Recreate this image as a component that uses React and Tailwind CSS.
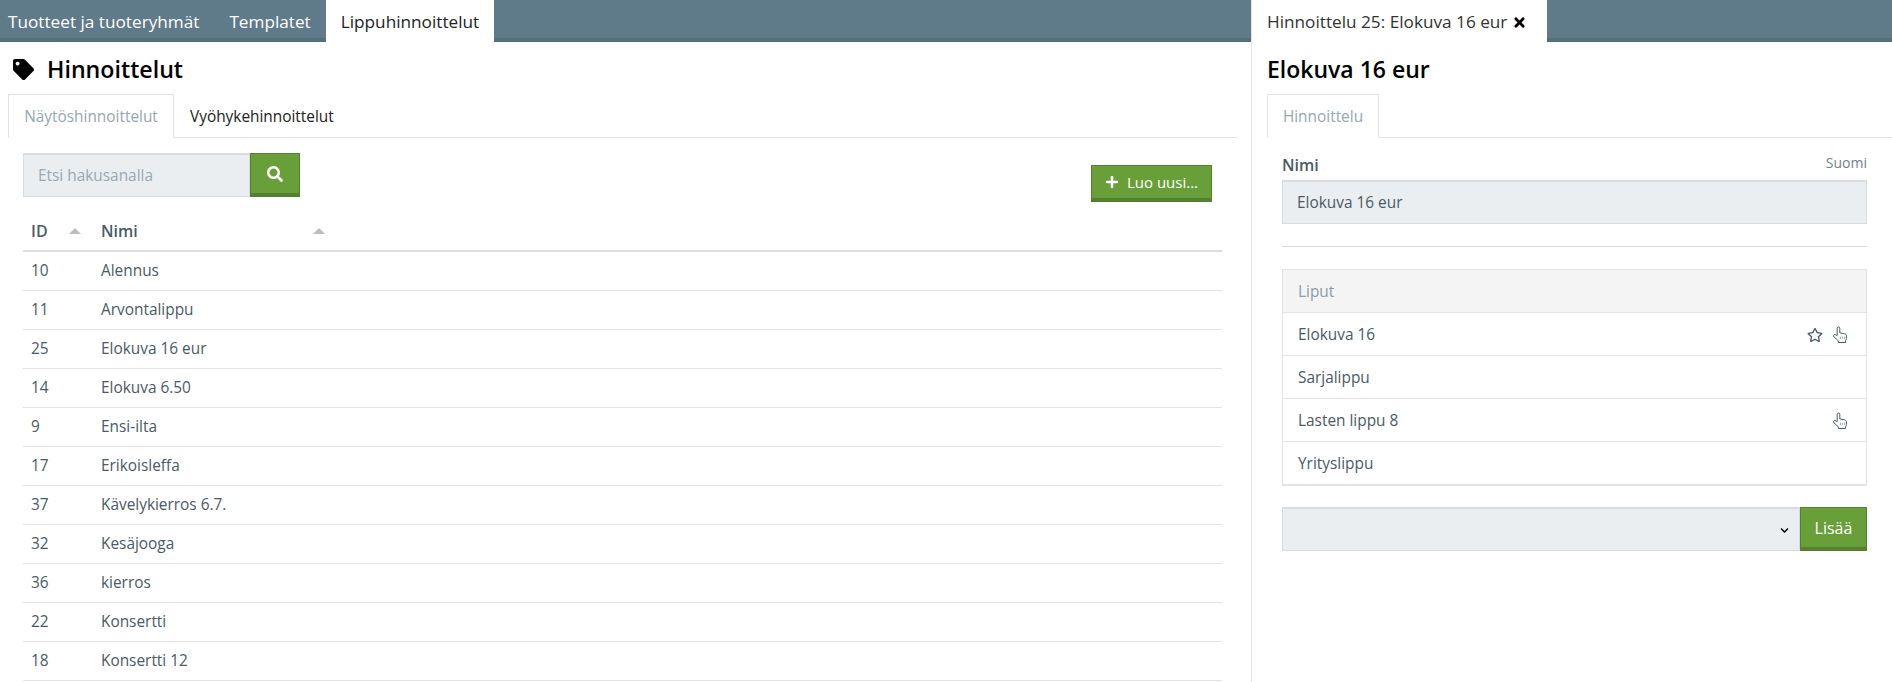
import React from 'react';
import { FaTag, FaSearch, FaPlus, FaTimes, FaRegStar, FaChevronDown } from 'react-icons/fa';

const pricings = [
  [10, 'Alennus'],
  [11, 'Arvontalippu'],
  [25, 'Elokuva 16 eur'],
  [14, 'Elokuva 6.50'],
  [9, 'Ensi-ilta'],
  [17, 'Erikoisleffa'],
  [37, 'Kävelykierros 6.7.'],
  [32, 'Kesäjooga'],
  [36, 'kierros'],
  [22, 'Konsertti'],
  [18, 'Konsertti 12'],
];

const tickets = [
  { name: 'Elokuva 16', star: true, hand: true },
  { name: 'Sarjalippu' },
  { name: 'Lasten lippu 8', hand: true },
  { name: 'Yrityslippu' },
];

function SortArrow() {
  return <span className="inline-block w-0 h-0 border-x-[6px] border-x-transparent border-b-[6px] border-b-[#bdbdbd]" />;
}

// thin outline pointer, the icon pack's one is too heavy at this size
function HandIcon() {
  return (
    <svg viewBox="0 0 16 18" className="w-[16px] h-[18px]" fill="none" stroke="currentColor" strokeWidth="1">
      <path d="M5.2 9.5V2.3a1.3 1.3 0 0 1 2.6 0V6.8l4.6 1c1.2.3 2 .9 2 2.2v2.5c0 1-.4 1.6-.9 2.3v1.7H6.3v-1.7L1.9 10.8c-.9-1-.3-2.5 1-2.3.7.1 1.3.8 2.3 1z" />
      <path d="M8.5 10.5V13M10.5 10.5V13M12.5 10.5V13" stroke="#a9b4bc" />
    </svg>
  );
}

function TopTab({ active, children }) {
  return (
    <div className={active
      ? 'h-[42px] pt-[2px] flex items-center px-[15px] bg-white text-[#222]'
      : 'h-[38px] pt-[2px] mt-[2px] flex items-center px-[8px] text-white'}>
      {children}
    </div>
  );
}

export default function App() {
  return (
    <div className="h-[682px] w-[1892px] overflow-hidden flex bg-white text-[15.4px] text-[#4a5a66] font-['Open_Sans',sans-serif]">
      {/* left panel */}
      <div className="w-[1251px] shrink-0">
        <div className="h-[42px] flex bg-[#5f7a89] border-b-4 border-[#566f7c] text-[17.2px]">
          <div className="flex h-[42px]">
            <TopTab>Tuotteet ja tuoteryhmät</TopTab>
            <div className="w-[14px]" />
            <TopTab>Templatet</TopTab>
            <div className="w-[7px]" />
            <TopTab active>Lippuhinnoittelut</TopTab>
          </div>
        </div>

        <h1 className="h-[52px] pt-[2px] pl-[13px] flex items-center gap-[13px] text-[23.2px] font-semibold text-black">
          <FaTag className="w-[21px] h-[21px]" />
          Hinnoittelut
        </h1>

        <div className="ml-[8px] mr-[14px] h-[44px] flex border-b border-[#e3e3e3]">
          <div className="w-[166px] h-[44px] pt-[2px] flex items-center justify-center bg-white border border-[#e3e3e3] border-b-white text-[#96a6b3]">Näytöshinnoittelut</div>
          <div className="px-[16px] pt-[2px] flex items-center text-[#222]">Vyöhykehinnoittelut</div>
        </div>

        <div className="pl-[23px] pr-[29px]">
          <div className="pt-[15px] flex items-start justify-between">
            <div className="flex">
              <div className="w-[227px] h-[44px] pl-[14px] flex items-center bg-[#ebeef0] border border-t-2 border-[#d6dce0] text-[#9aa8b3]">Etsi hakusanalla</div>
              <button className="w-[50px] h-[44px] flex items-center justify-center bg-[#689f38] border border-[#548030] border-b-4 text-white">
                <FaSearch className="w-[16px] h-[16px]" />
              </button>
            </div>
            <button className="mt-[12px] mr-[10px] w-[121px] h-[37px] flex items-center justify-center gap-[8px] bg-[#689f38] border border-[#548030] border-b-4 text-[15px] text-white">
              <FaPlus className="w-[14px] h-[14px]" />
              Luo uusi...
            </button>
          </div>

          <table className="mt-[10px] w-full border-collapse">
            <thead>
              <tr className="h-[39px] border-b-2 border-[#dedede] text-left text-[16px]">
                <th className="w-[70px] pl-[8px] font-semibold">
                  <div className="flex items-center justify-between pr-[12px]">ID<SortArrow /></div>
                </th>
                <th className="w-[240px] pl-[8px] font-semibold">
                  <div className="flex items-center justify-between pr-[8px]">Nimi<SortArrow /></div>
                </th>
                <th />
              </tr>
            </thead>
            <tbody>
              {pricings.map(([id, name]) => (
                <tr key={id} className="h-[39px] border-b border-[#e3e3e3]">
                  <td className="pl-[8px]">{id}</td>
                  <td className="pl-[8px]" colSpan={2}>{name}</td>
                </tr>
              ))}
            </tbody>
          </table>
        </div>
      </div>

      {/* right panel */}
      <div className="flex-1 border-l border-[#e6e6e6]">
        <div className="h-[42px] bg-[#5f7a89] border-b-4 border-[#566f7c] flex">
          <div className="w-[295px] h-[42px] pt-[2px] pl-[15px] flex items-center gap-[5px] bg-white text-[#333] text-[17.2px]">
            Hinnoittelu 25: Elokuva 16 eur
            <FaTimes className="w-[15px] h-[15px] text-black" />
          </div>
        </div>

        <h2 className="h-[52px] pt-[2px] pl-[15px] flex items-center text-[23px] font-semibold text-black">Elokuva 16 eur</h2>

        <div className="ml-[15px] h-[44px] flex border-b border-[#e3e3e3]">
          <div className="w-[112px] h-[44px] pt-[2px] flex items-center justify-center bg-white border border-[#e3e3e3] border-b-white text-[#96a6b3]">Hinnoittelu</div>
        </div>

        <div className="pl-[30px] pr-[25px]">
          <div className="pt-[14px] h-[42px] flex items-start justify-between">
            <span className="mt-[1px] text-[16px] font-semibold">Nimi</span>
            <span className="text-[14px] text-[#6f8190]">Suomi</span>
          </div>
          <div className="h-[44px] pl-[14px] flex items-center bg-[#ebeef0] border border-t-2 border-[#d6dce0]">Elokuva 16 eur</div>
          <div className="mt-[22px] border-t border-[#d6dce0]" />

          <div className="mt-[22px] border border-b-2 border-[#e3e3e3]">
            <div className="h-[42px] pt-[2px] pl-[15px] flex items-center bg-[#f4f4f4] text-[#8b9ba7]">Liput</div>
            {tickets.map((t) => (
              <div key={t.name} className="h-[43px] pt-[2px] pl-[15px] pr-[18px] flex items-center justify-between border-t border-[#e3e3e3]">
                {t.name}
                <span className="flex items-center gap-[9px]">
                  {t.star && <FaRegStar className="w-[16px] h-[16px]" />}
                  {t.hand && <HandIcon />}
                </span>
              </div>
            ))}
          </div>

          <div className="mt-[21px] flex">
            <div className="relative flex-1 min-w-0">
              <select className="block w-full h-[44px] appearance-none bg-[#ebeef0] border border-t-2 border-[#d6dce0]" />
              <FaChevronDown className="absolute right-[11px] top-[19px] w-[9px] h-[9px] text-black pointer-events-none" />
            </div>
            <button className="w-[67px] h-[44px] bg-[#689f38] border border-[#548030] border-b-4 text-[16px] text-white">Lisää</button>
          </div>
        </div>
      </div>
    </div>
  );
}
